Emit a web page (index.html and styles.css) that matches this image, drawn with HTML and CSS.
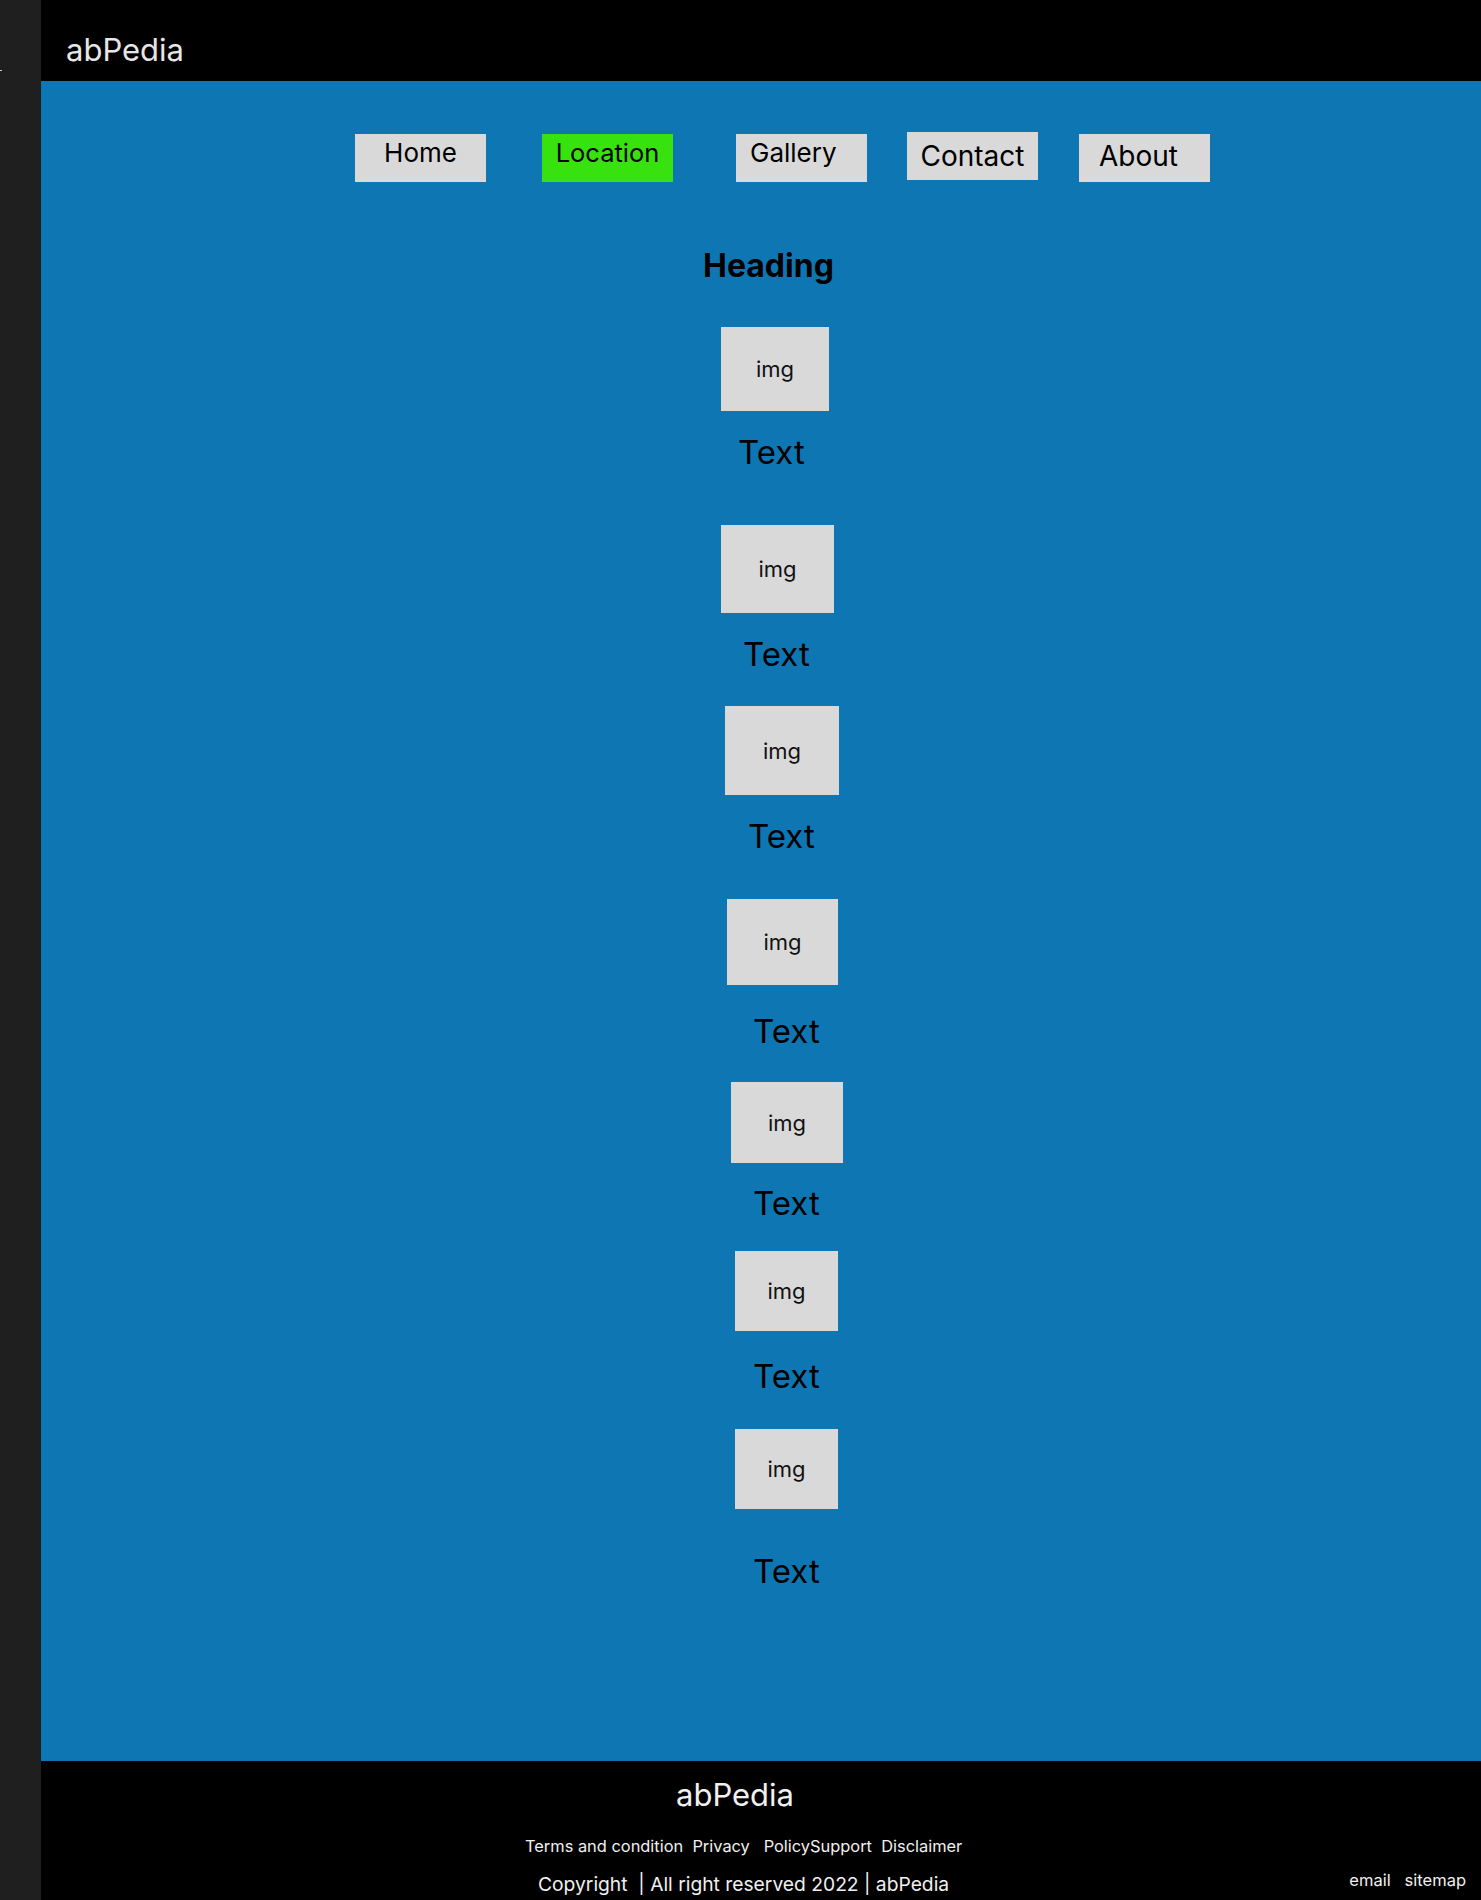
FILE: index.html
```html
<!DOCTYPE html>
<html lang="en">
<head>
<meta charset="utf-8">
<title>abPedia</title>
<link rel="stylesheet" href="styles.css">
</head>
<body>
<div class="layout">
  <aside class="sidebar"><span class="sidebar-mark"></span></aside>
  <div class="page">
    <header class="topbar"><div class="brand">abPedia</div></header>
    <main class="content">
      <nav class="nav">
        <a class="nav-btn nav-home">Home</a>
        <a class="nav-btn nav-location">Location</a>
        <a class="nav-btn nav-gallery">Gallery</a>
        <a class="nav-btn nav-contact">Contact</a>
        <a class="nav-btn nav-about">About</a>
      </nav>
      <h1 class="heading">Heading</h1>
      <div class="thumb thumb-1">img</div>
      <p class="caption caption-1">Text</p>
      <div class="thumb thumb-2">img</div>
      <p class="caption caption-2">Text</p>
      <div class="thumb thumb-3">img</div>
      <p class="caption caption-3">Text</p>
      <div class="thumb thumb-4">img</div>
      <p class="caption caption-4">Text</p>
      <div class="thumb thumb-5">img</div>
      <p class="caption caption-5">Text</p>
      <div class="thumb thumb-6">img</div>
      <p class="caption caption-6">Text</p>
      <div class="thumb thumb-7">img</div>
      <p class="caption caption-7">Text</p>
    </main>
    <footer class="footer">
      <div class="footer-brand">abPedia</div>
      <div class="footer-links">Terms and condition  Privacy   PolicySupport  Disclaimer</div>
      <div class="footer-bottom">
        <div class="copyright">Copyright  | All right reserved 2022 | abPedia</div>
        <div class="footer-meta">email   sitemap</div>
      </div>
    </footer>
  </div>
</div>
</body>
</html>
```
FILE: styles.css
```css
html, body {
  margin: 0;
  padding: 0;
  background: #1f1f1f;
}

body {
  font-family: "Inter", "Noto Sans", "Liberation Sans", sans-serif;
  color: #000;
}

.layout {
  display: flex;
  min-height: 1900px;
}

.sidebar {
  width: 41px;
  flex: 0 0 41px;
  background: #1f1f1f;
}

.sidebar-mark {
  display: block;
  width: 2px;
  height: 1px;
  margin-top: 70px;
  background: #cfcfcf;
}

.page {
  width: 1440px;
  flex: 0 0 1440px;
  display: flex;
  flex-direction: column;
}

/* Header */
.topbar {
  height: 81px;
  box-sizing: border-box;
  background: #000;
  padding: 32px 0 0 25px;
}

.brand {
  font-size: 31px;
  line-height: 36px;
  color: #e6e6e6;
}

/* Main */
.content {
  height: 1680px;
  box-sizing: border-box;
  background: #0e77b3;
  display: flex;
  flex-direction: column;
  align-items: flex-start;
}

.nav {
  display: flex;
  align-items: flex-start;
  padding: 51px 0 0 314px;
}

.nav-btn {
  display: block;
  width: 131px;
  height: 48px;
  box-sizing: border-box;
  background: #d9d9d9;
  color: #000;
  font-size: 26px;
  line-height: normal;
  text-align: center;
  padding-top: 3px;
  margin-top: 2px;
  text-decoration: none;
}

.nav-location {
  margin-left: 56px;
  background: #37e20e;
  font-size: 25.5px;
}

.nav-gallery {
  margin-left: 63px;
  text-align: left;
  padding-left: 14px;
}

.nav-contact {
  margin-left: 40px;
  margin-top: 0;
  font-size: 28px;
  padding-top: 7px;
}

.nav-about {
  margin-left: 41px;
  font-size: 28px;
  padding-top: 5px;
  text-align: left;
  padding-left: 20px;
}

.heading {
  margin: 64px 0 0 662px;
  font-size: 32px;
  line-height: 39px;
  font-weight: 700;
}

.thumb {
  display: flex;
  align-items: center;
  justify-content: center;
  background: #d9d9d9;
  color: #111;
  font-size: 22px;
  line-height: 26px;
}

.thumb-1 { width: 108px; height: 84px; margin: 42px 0 0 680px; }
.thumb-2 { width: 113px; height: 88px; margin: 53px 0 0 680px; }
.thumb-3 { width: 114px; height: 89px; margin: 32px 0 0 684px; }
.thumb-4 { width: 111px; height: 86px; margin: 43px 0 0 686px; }
.thumb-5 { width: 112px; height: 81px; margin: 31px 0 0 690px; }
.thumb-6 { width: 103px; height: 80px; margin: 28px 0 0 694px; }
.thumb-7 { width: 103px; height: 80px; margin: 33px 0 0 694px; }

.caption {
  font-size: 33px;
  line-height: 39px;
  margin: 0;
}

.caption-1 { margin: 22px 0 0 697px; }
.caption-2 { margin: 22px 0 0 702px; }
.caption-3 { margin: 22px 0 0 707px; }
.caption-4 { margin: 27px 0 0 712px; }
.caption-5 { margin: 21px 0 0 712px; }
.caption-6 { margin: 26px 0 0 712px; }
.caption-7 { margin: 43px 0 0 712px; }

/* Footer */
.footer {
  height: 139px;
  box-sizing: border-box;
  background: #000;
  color: #f0f0f0;
  padding-top: 16px;
  display: flex;
  flex-direction: column;
  align-items: flex-start;
  overflow: hidden;
}

.footer-brand {
  font-size: 31px;
  line-height: 36px;
  margin-left: 635px;
}

.footer-links {
  font-size: 16.4px;
  line-height: 20px;
  margin: 23px 0 0 484px;
  white-space: pre;
}

.footer-bottom {
  align-self: stretch;
  display: flex;
  align-items: flex-start;
  margin-top: 14px;
}

.copyright {
  font-size: 19.25px;
  line-height: 24px;
  margin: 2px 0 0 497px;
  white-space: pre;
}

.footer-meta {
  margin-left: auto;
  padding-right: 15px;
  font-size: 16.5px;
  line-height: 20px;
  white-space: pre;
}
```
